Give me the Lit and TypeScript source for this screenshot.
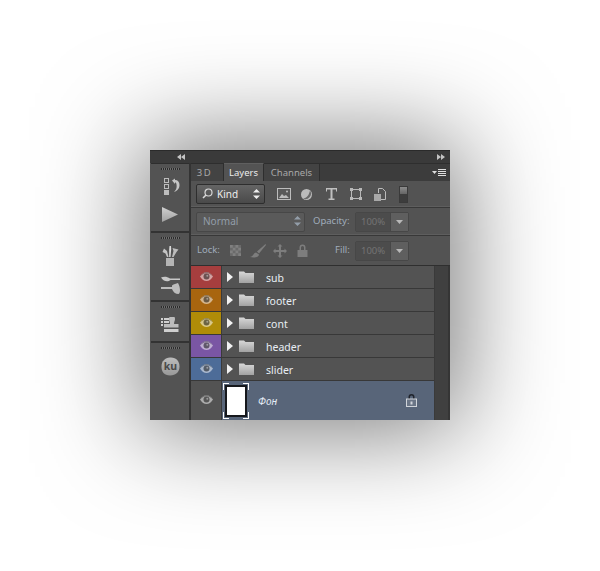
import { LitElement, html, css } from "lit";
import { customElement } from "lit/decorators.js";

const eye = () => html`<svg class="eye" width="13" height="9" viewBox="0 0 13 9">
  <path d="M0 4.500C2 1.500 4 0 6.500 0S11 1.500 13 4.500C11 7.500 9 9 6.500 9S2 7.500 0 4.500z" fill="rgba(255,255,255,.52)"/>
  <path d="M0 4.500C2 1.500 4 0 6.500 0S11 1.500 13 4.500C11 2.500 9 1.200 6.500 1.200S2 2.500 0 4.500z" fill="rgba(0,0,0,.32)"/>
  <circle cx="6.500" cy="4.500" r="3" fill="rgba(0,0,0,.5)"/>
  <circle cx="7.300" cy="3.700" r="1" fill="rgba(255,255,255,.4)"/>
</svg>`;

const folder = () => html`<svg width="15" height="12" viewBox="0 0 15 12">
  <defs><linearGradient id="fg" x1="0" y1="0" x2="0" y2="1"><stop offset="0" stop-color="#d8d8d8"/><stop offset="1" stop-color="#a2a2a2"/></linearGradient></defs>
  <path d="M0 0.500h5l1.500 1.500H15V12H0z" fill="url(#fg)"/>
</svg>`;

const layers = [
  { name: "sub", color: "#a63e3e" },
  { name: "footer", color: "#a8650f" },
  { name: "cont", color: "#b08c08" },
  { name: "header", color: "#7a56a4" },
  { name: "slider", color: "#4d6c98" },
];

@customElement("app-root")
export class AppRoot extends LitElement {
  static styles = css`
    :host {
      display: block;
      height: 571px;
      background: #fff;
      overflow: hidden;
      font-family: "Noto Sans", "Liberation Sans", sans-serif;
    }
    .page {
      padding: 150px 150px 0;
    }
    .panel {
      width: 300px;
      height: 270px;
      background: #535353;
      box-shadow: 0 0 100px 10px rgba(0, 0, 0, 0.53);
      display: flex;
      flex-direction: column;
      overflow: hidden;
    }
    .topbar {
      height: 13px;
      flex: none;
      background: #3a3a3a;
      border-top: 1px solid #2a2a2a;
      box-sizing: border-box;
      display: flex;
      justify-content: space-between;
      align-items: center;
      padding: 0 5px 0 27px;
    }
    .body {
      flex: 1;
      display: flex;
      min-height: 0;
    }
    .dock {
      width: 38px;
      flex: none;
      margin-left: 1px;
      display: flex;
      flex-direction: column;
      border-top: 1px solid #2e2e2e;
    }
    .dock-group {
      display: flex;
      flex-direction: column;
      align-items: center;
      box-sizing: border-box;
      padding-top: 4px;
      border-bottom: 2px solid #333;
      background: #535353;
    }
    .g1 { height: 69px; }
    .g2 { height: 69px; }
    .g3 { height: 41px; }
    .g4 { flex: 1; border-bottom: none; }
    .grip {
      width: 19px;
      height: 2px;
      background: repeating-linear-gradient(90deg, #2b2b2b 0 1px, #6e6e6e 1px 2px);
      flex: none;
    }
    .g1 .i1 { margin: 8px 0 0 3px; }
    .g1 .i2 { margin-top: 12px; }
    .g2 .i1 { margin-top: 7px; }
    .g2 .i2 { margin-top: 10px; }
    .g3 .i1 { margin-top: 9px; }
    .g4 .i1 { margin-top: 8px; }
    .gutter {
      width: 2px;
      flex: none;
      background: #333;
    }
    .main {
      flex: 1;
      display: flex;
      flex-direction: column;
      min-width: 0;
    }
    .tabs {
      height: 18px;
      flex: none;
      background: #3c3c3c;
      display: flex;
      font-size: 9.500px;
      color: #a9a9a9;
    }
    .tab {
      display: flex;
      align-items: center;
      justify-content: center;
      background: #434343;
      border-right: 1px solid #2e2e2e;
      box-sizing: border-box;
      border-top: 1px solid #2e2e2e;
    }
    .tab.d3 { width: 33px; letter-spacing: 1.500px; padding-right: 5px; }
    .tab.ly { width: 40px; background: #535353; color: #ececec; border-top: 1px solid #5f5f5f; }
    .tab.ch { width: 56px; }
    .tabs .rest {
      flex: 1;
      display: flex;
      justify-content: flex-end;
      align-items: center;
      padding-right: 4px;
      border-top: 1px solid #2e2e2e;
    }
    .bar {
      display: flex;
      align-items: center;
      flex: none;
      box-sizing: border-box;
      padding-left: 5px;
      border-bottom: 1px solid #383838;
      box-shadow: inset 0 -1px 0 #5e5e5e;
    }
    .filter { height: 27px; }
    .mode { height: 28px; }
    .lock { height: 30px; border-bottom: 1px solid #2f2f2f; box-shadow: none; }
    .select {
      box-sizing: border-box;
      height: 20px;
      border: 1px solid #383838;
      border-radius: 2px;
      display: flex;
      align-items: center;
      justify-content: space-between;
      font-size: 10px;
    }
    .kind {
      width: 69px;
      background: linear-gradient(#656565, #4a4a4a);
      color: #eee;
      padding: 0 4px 0 5px;
      border-color: #2e2e2e;
    }
    .kind .lbl { display: flex; align-items: center; gap: 4px; padding-bottom: 1px; }
    .normal {
      width: 109px;
      background: #5a5a5a;
      border-color: #474747;
      color: #939ea9;
      padding: 0 3px 1px 6px;
    }
    .filter-icons {
      display: flex;
      align-items: center;
      margin-left: 12px;
    }
    .filter-icons svg { flex: none; display: block; }
    .filter-icons .circle { margin-left: 10px; }
    .filter-icons .type { margin-left: 14px; }
    .filter-icons .box { margin-left: 13px; }
    .filter-icons .doc { margin-left: 12px; }
    .toggle {
      width: 9px;
      height: 17px;
      flex: none;
      border: 1px solid #3a3a3a;
      background: linear-gradient(#8c8c8c 0, #646464 48%, #3d3d3d 50%, #3d3d3d 100%);
      margin-left: 13px;
      box-sizing: border-box;
    }
    .label {
      font-size: 9.500px;
      color: #a0adbc;
      padding-bottom: 3px;
    }
    .field {
      display: flex;
      height: 20px;
      width: 54px;
      box-sizing: border-box;
      border: 1px solid #474747;
      border-radius: 2px;
      flex: none;
    }
    .field .val {
      width: 34px;
      background: #4c4c4c;
      font-size: 9.500px;
      color: #747474;
      display: flex;
      align-items: center;
      padding-left: 5px;
      box-sizing: border-box;
    }
    .field .btn {
      flex: 1;
      background: #5f5f5f;
      border-left: 1px solid #474747;
      display: flex;
      align-items: center;
      justify-content: center;
    }
    .mode .label { margin: 0 6px 0 8px; width: 36px; white-space: nowrap; }
    .lock .label.l { margin: 0 10px 0 1px; width: 23px; }
    .lock .label.f { margin-left: 27px; margin-right: 6px; width: 14px; white-space: nowrap; }
    .lock-icons { display: flex; align-items: center; width: 78px; }
    .lock-icons svg { flex: none; display: block; }
    .lock-icons .brush { margin-left: 9px; }
    .lock-icons .move { margin-left: 7px; }
    .lock-icons .closed { margin-left: 10px; }
    .list {
      flex: 1;
      display: flex;
      min-height: 0;
    }
    .rows { width: 243px; flex: none; display: flex; flex-direction: column; }
    .row {
      height: 23px;
      box-sizing: border-box;
      border-bottom: 1px solid #383838;
      display: flex;
      align-items: center;
      flex: none;
    }
    .swatch {
      width: 30px;
      height: 100%;
      display: flex;
      align-items: center;
      justify-content: center;
      border-right: 1px solid #3a3a3a;
      flex: none;
      box-sizing: content-box;
    }
    .eye { margin-bottom: 2px; }
    .arrow {
      width: 0;
      height: 0;
      border-left: 6px solid #f2f2f2;
      border-top: 5px solid transparent;
      border-bottom: 5px solid transparent;
      margin: 0 6px 0 5px;
    }
    .row .name {
      margin-left: 12px;
      padding-top: 2px;
      font-size: 10.500px;
      color: #e8eef4;
    }
    .row.bg {
      flex: 1;
      border-bottom: none;
      background: #535353;
    }
    .bg .sel {
      flex: 1;
      height: 100%;
      background: #586579;
      display: flex;
      align-items: center;
      padding-left: 1px;
      box-sizing: border-box;
    }
    .thumb {
      position: relative;
      width: 26px;
      height: 36px;
      flex: none;
      box-sizing: border-box;
      padding: 2px;
    }
    .thumb .paper {
      width: 100%;
      height: 100%;
      box-sizing: border-box;
      background: #fff;
      border: 2px solid #16181c;
    }
    .corner { position: absolute; width: 5px; height: 6px; border: 0 solid #fff; }
    .c1 { left: 0; top: 0; border-left-width: 1px; border-top-width: 1px; }
    .c2 { right: 0; top: 0; border-right-width: 1px; border-top-width: 1px; }
    .c3 { left: 0; bottom: 0; border-left-width: 1px; border-bottom-width: 1px; }
    .c4 { right: 0; bottom: 0; border-right-width: 1px; border-bottom-width: 1px; }
    .bg .name {
      margin-left: 9px;
      padding-top: 0;
      font-size: 10px;
      font-style: italic;
      color: #e4ecf6;
      flex: 1;
    }
    .padlock { margin: 0 17px 1px 0; display: block; }
    .scroll {
      flex: 1;
      background: #404040;
      border-left: 1px solid #3a3a3a;
      display: flex;
      justify-content: flex-end;
    }
    .scroll i {
      width: 2px;
      background: #353535;
    }
  `;

  private updown() {
    return html`<svg width="7" height="10" viewBox="0 0 7 10"><path d="M3.500 0L7 3.500H0zM3.500 10L0 6.500h7z" fill="currentColor"/></svg>`;
  }

  private caret() {
    return html`<svg width="7" height="4" viewBox="0 0 7 4"><path d="M0 0h7L3.500 4z" fill="#b8b8b8"/></svg>`;
  }

  private dockIcons() {
    return html`
      <div class="dock-group g1">
        <div class="grip"></div>
        <svg class="i1" width="16" height="17" viewBox="0 0 16 17">
          <rect x="0.500" y="0.500" width="4" height="4" fill="none" stroke="#bcbcbc"/>
          <rect x="0.500" y="6.500" width="4" height="4" fill="none" stroke="#bcbcbc"/>
          <rect x="0" y="12" width="5" height="5" fill="#bcbcbc"/>
          <path d="M8 2.500L11 0.500V2C14 2 15.500 4 15.500 7S14 12.500 10 14c2-2 3-4 2.600-7C12.300 5 12 4.500 11 4.500V6z" fill="#c4c4c4"/>
        </svg>
        <svg class="i2" width="16" height="15" viewBox="0 0 16 15">
          <defs><linearGradient id="pl" x1="0" y1="0" x2="0" y2="1"><stop offset="0" stop-color="#d0d0d0"/><stop offset="1" stop-color="#a0a0a0"/></linearGradient></defs>
          <path d="M0 0L16 7.500L0 15z" fill="url(#pl)"/>
        </svg>
      </div>
      <div class="dock-group g2">
        <div class="grip"></div>
        <svg class="i1" width="17" height="20" viewBox="0 0 17 20">
          <path d="M4 12h8v8H4z" fill="#b4b4b4"/>
          <path d="M5 11L3.500 7.500 0.500 6 2 2.500 5 5 6.500 11z" fill="#c4c4c4"/>
          <path d="M7.200 11V3L7.500 0h1.500l.2 3-.7 8z" fill="#dcdcdc"/>
          <path d="M10 11l1.500-6L10.500 2l6 1.500-2 2.500-3 5z" fill="#bcbcbc"/>
        </svg>
        <svg class="i2" width="19" height="18" viewBox="0 0 19 18">
          <path d="M0 1.500C3 0.500 6 0.500 9 2.500h10v1.500H9.500C7 6 3 6 0 1.500z" fill="#c8c8c8"/>
          <path d="M0 11h11V9.500C13 8 15 7.500 17 7c1.500 2.500 2 5 2 7.500 0 1.500-.5 3-1.500 3.500-3 0-5.500-2-6.500-5H0z" fill="#bcbcbc"/>
        </svg>
      </div>
      <div class="dock-group g3">
        <div class="grip"></div>
        <svg class="i1" width="18" height="15" viewBox="0 0 18 15">
          <path d="M0 1h2v2H0zM3 1h5v2H3zM0 4h2v2H0zM3 4h5v2H3zM0 7h2v2H0zM3 7h5v2H3z" fill="#d0d0d0"/>
          <path d="M8 2a3 3 0 0 1 6 0c0 2-1 2.500-1 5h4.500v3.500H3V7h6c0-2.500-1-3-1-5z" fill="#bcbcbc"/>
          <path d="M3 12h14.500v3H3z" fill="#cfcfcf"/>
        </svg>
      </div>
      <div class="dock-group g4">
        <div class="grip"></div>
        <svg class="i1" width="19" height="19" viewBox="0 0 19 19">
          <defs><linearGradient id="kg" x1="0" y1="0" x2="0" y2="1"><stop offset="0" stop-color="#bcbcbc"/><stop offset="1" stop-color="#989898"/></linearGradient></defs>
          <path d="M9 0.500C15 0 18.500 4 18.500 9.500S15 18.500 9 18.500 0.500 15 0.500 9.500 4 1 9 0.500z" fill="url(#kg)"/>
          <text x="9.500" y="13" text-anchor="middle" font-family="Noto Sans, sans-serif" font-size="10.500" font-weight="700" fill="#4a4a4a">ku</text>
        </svg>
      </div>
    `;
  }

  private filterIcons() {
    return html`<div class="filter-icons">
      <svg width="14" height="12" viewBox="0 0 14 12">
        <rect x="0.500" y="0.500" width="13" height="11" fill="#5a5a5a" stroke="#bdbdbd"/>
        <path d="M2 10l3-4 2 2 2-1 3 3z" fill="#bdbdbd"/><circle cx="10" cy="3.500" r="1" fill="#bdbdbd"/>
      </svg>
      <svg class="circle" width="11" height="11" viewBox="0 0 11 11">
        <circle cx="5.500" cy="5.500" r="5.500" fill="#bcbcbc"/><path d="M9 1.500A5.500 5.500 0 0 1 2 9.500C6 9 8 6 9 1.500z" fill="#6a6a6a"/>
      </svg>
      <svg class="type" width="11" height="12" viewBox="0 0 11 12">
        <path d="M0 0h11v3.500h-1V1.500H6.500V10.500h2V12h-6v-1.500h2V1.500H1V3.500H0z" fill="#c0c0c0"/>
      </svg>
      <svg class="box" width="12" height="12" viewBox="0 0 12 12">
        <path d="M1.500 1.500h9v9h-9z" fill="none" stroke="#b8b8b8"/>
        <path d="M0 0h3v3H0zM9 0h3v3H9zM0 9h3v3H0zM9 9h3v3H9z" fill="#b8b8b8"/>
      </svg>
      <svg class="doc" width="12" height="13" viewBox="0 0 12 13">
        <path d="M4.500 5V0.500h4l3 3v8H7" fill="none" stroke="#bcbcbc"/>
        <path d="M0 6h7v7H0z" fill="#a8a8a8"/>
      </svg>
      <div class="toggle"></div>
    </div>`;
  }

  private lockIcons() {
    return html`<div class="lock-icons">
      <svg width="11" height="11" viewBox="0 0 12 12">
        <rect width="12" height="12" fill="#6a6a6a"/>
        <path d="M0 0h3v3H0zM6 0h3v3H6zM3 3h3v3H3zM9 3h3v3H9zM0 6h3v3H0zM6 6h3v3H6zM3 9h3v3H3zM9 9h3v3H9z" fill="#808080"/>
      </svg>
      <svg class="brush" width="16" height="14" viewBox="0 0 16 14">
        <path d="M15.500 0L7 7.500 9 9.500 16 1z" fill="#7d7d7d"/><path d="M6 8.500C3 9 4 12 0 13c4 1 9 .5 9-2.500z" fill="#7d7d7d"/>
      </svg>
      <svg class="move" width="14" height="14" viewBox="0 0 14 14">
        <path d="M7 0l2.500 2.500H8v3.500h3.500V4.500L14 7l-2.500 2.500V8H8v3.500h1.500L7 14l-2.500-2.500H6V8H2.500v1.500L0 7l2.500-2.500V6H6V2.500H4.500z" fill="#7d7d7d"/>
      </svg>
      <svg class="closed" width="11" height="13" viewBox="0 0 11 13">
        <path d="M2.500 6V3.500a3 3 0 0 1 6 0V6H7V3.500a1.500 1.500 0 0 0-3 0V6z" fill="#7d7d7d"/><rect x="0.500" y="6" width="10" height="7" fill="#7d7d7d"/>
      </svg>
    </div>`;
  }

  render() {
    return html`<div class="page">
      <div class="panel">
        <div class="topbar">
          <svg width="8" height="6" viewBox="0 0 8 6"><path d="M4 0v6L0 3zM8 0v6L4 3z" fill="#c4c4c4"/></svg>
          <svg width="8" height="6" viewBox="0 0 8 6"><path d="M0 0v6l4-3zM4 0v6l4-3z" fill="#c4c4c4"/></svg>
        </div>
        <div class="body">
          <div class="dock">${this.dockIcons()}</div>
          <div class="gutter"></div>
          <div class="main">
            <div class="tabs">
              <div class="tab d3">3D</div>
              <div class="tab ly">Layers</div>
              <div class="tab ch">Channels</div>
              <div class="rest">
                <svg width="14" height="8" viewBox="0 0 14 8">
                  <path d="M0 2h5L2.500 5z" fill="#ddd"/>
                  <path d="M6 0h8v1H6zM6 2h8v1H6zM6 4h8v1H6zM6 6h8v1H6z" fill="#ddd"/>
                </svg>
              </div>
            </div>
            <div class="bar filter">
              <div class="select kind">
                <span class="lbl">
                  <svg width="11" height="11" viewBox="0 0 11 11">
                    <circle cx="6.500" cy="4.500" r="3.500" fill="none" stroke="#d8d8d8" stroke-width="1.200"/>
                    <path d="M4 7L1 10" stroke="#d8d8d8" stroke-width="1.600"/>
                  </svg>
                  Kind
                </span>
                ${this.updown()}
              </div>
              ${this.filterIcons()}
            </div>
            <div class="bar mode">
              <div class="select normal">Normal ${this.updown()}</div>
              <span class="label">Opacity:</span>
              <div class="field"><div class="val">100%</div><div class="btn">${this.caret()}</div></div>
            </div>
            <div class="bar lock">
              <span class="label l">Lock:</span>
              ${this.lockIcons()}
              <span class="label f">Fill:</span>
              <div class="field"><div class="val">100%</div><div class="btn">${this.caret()}</div></div>
            </div>
            <div class="list">
              <div class="rows">
                ${layers.map(
                  (l) => html`<div class="row">
                    <div class="swatch" style="background:${l.color}">${eye()}</div>
                    <div class="arrow"></div>
                    ${folder()}
                    <span class="name">${l.name}</span>
                  </div>`
                )}
                <div class="row bg">
                  <div class="swatch">${eye()}</div>
                  <div class="sel">
                    <div class="thumb">
                      <div class="paper"></div>
                      <i class="corner c1"></i><i class="corner c2"></i><i class="corner c3"></i><i class="corner c4"></i>
                    </div>
                    <span class="name">Фон</span>
                    <svg class="padlock" width="11" height="13" viewBox="0 0 11 13">
                      <path d="M2.500 5V3a3 3 0 0 1 6 0V5H7V3a1.500 1.500 0 0 0-3 0V5z" fill="#20242c"/>
                      <rect x="0.500" y="5" width="10" height="7.500" fill="#6a7586" stroke="#d0d4da"/>
                      <rect x="4.500" y="7.500" width="2" height="3" fill="#d0d4da"/>
                    </svg>
                  </div>
                </div>
              </div>
              <div class="scroll"><i></i></div>
            </div>
          </div>
        </div>
      </div>
    </div>`;
  }
}
